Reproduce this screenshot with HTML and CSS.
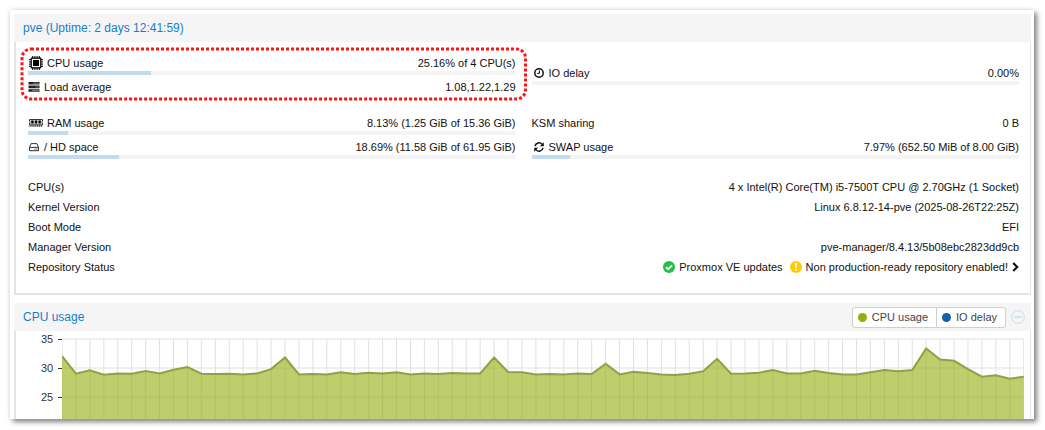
FILE: index.html
```html
<!DOCTYPE html>
<html lang="en">
<head>
  <meta charset="UTF-8" />
  <meta name="viewport" content="width=device-width, initial-scale=1" />
  <title>pve - Node Summary</title>
  <link rel="stylesheet" href="styles.css">
</head>
<body>

<main class="window">
  <section class="panel">
    <header class="panel-header">
      <h2>pve (Uptime: 2 days 12:41:59)</h2>
    </header>

    <div class="panel-body status">
      <div class="stats">
        <div class="stat-group highlighted">
          <svg class="highlight" aria-hidden="true"><rect x="1" y="1" rx="9" /></svg>
          <div class="stat">
            <div class="stat-line">
              <svg class="icon wide" viewBox="0 0 14 14" aria-hidden="true">
                <path d="M3.5 0v14M5.25 0v14M7 0v14M8.75 0v14M10.5 0v14M0 3.5h14M0 5.25h14M0 7h14M0 8.75h14M0 10.5h14" stroke="#111" stroke-width="0.9" />
                <rect x="1.6" y="1.6" width="10.8" height="10.8" rx="1" fill="#111" />
                <rect x="2.9" y="2.9" width="8.2" height="8.2" fill="#fff" />
                <rect x="4" y="4" width="6" height="6" fill="#000" />
              </svg>
              <span>CPU usage</span>
              <span class="value">25.16% of 4 CPU(s)</span>
            </div>
            <div class="bar"><div class="fill" style="width: 25.16%"></div></div>
          </div>
          <div class="stat">
            <div class="stat-line">
              <svg class="icon" viewBox="0 0 12 12" aria-hidden="true">
                <path d="M0.5 1h11v2.6h-11zM0.5 4.6h11v2.6h-11zM0.5 8.2h11v2.6h-11z" fill="#222" />
                <path d="M5 2.3h5.5M7.5 5.9h3M4 9.5h6.5" stroke="#777" stroke-width="1" />
              </svg>
              <span>Load average</span>
              <span class="value">1.08,1.22,1.29</span>
            </div>
          </div>
        </div>

        <div class="stat-group centered">
          <div class="stat">
            <div class="stat-line">
              <svg class="icon spaced" viewBox="0 0 12 12" aria-hidden="true">
                <circle cx="6" cy="6" r="4.2" fill="none" stroke="#111" stroke-width="1.5" />
                <path d="M6.4 3.4v3H4.1" fill="none" stroke="#111" stroke-width="1" />
              </svg>
              <span>IO delay</span>
              <span class="value">0.00%</span>
            </div>
            <div class="bar"><div class="fill" style="width: 0%"></div></div>
          </div>
        </div>

        <div class="stat-group">
          <div class="stat">
            <div class="stat-line">
              <svg class="icon wide" viewBox="0 0 14 14" aria-hidden="true">
                <path d="M0.5 3.5h13v1.7a1 1 0 0 0 0 1.8v1.8H0.5V7a1 1 0 0 0 0-1.8z" fill="#ddd" stroke="#222" stroke-width="0.9" />
                <path d="M2.2 4.6h2.4v3H2.2zM5.8 4.6h2.4v3H5.8zM9.4 4.6h2.4v3H9.4z" fill="#000" />
                <path d="M0.5 10h13" stroke="#222" stroke-width="1.6" stroke-dasharray="1.2 0.7" />
              </svg>
              <span>RAM usage</span>
              <span class="value">8.13% (1.25 GiB of 15.36 GiB)</span>
            </div>
            <div class="bar"><div class="fill" style="width: 8.13%"></div></div>
          </div>
          <div class="stat">
            <div class="stat-line">
              <svg class="icon" viewBox="0 0 12 12" aria-hidden="true">
                <path d="M1.5 6.3 3.2 2.6h5.6l1.7 3.7v3.4h-9zM1.5 6.4h9" fill="none" stroke="#333" stroke-width="1" stroke-linejoin="round" />
                <path d="M6.6 8.1h1M8.4 8.1h1" stroke="#333" stroke-width="1" />
              </svg>
              <span>/ HD space</span>
              <span class="value">18.69% (11.58 GiB of 61.95 GiB)</span>
            </div>
            <div class="bar"><div class="fill" style="width: 18.69%"></div></div>
          </div>
        </div>

        <div class="stat-group">
          <div class="stat">
            <div class="stat-line">
              <span>KSM sharing</span>
              <span class="value">0 B</span>
            </div>
          </div>
          <div class="stat">
            <div class="stat-line">
              <svg class="icon spaced" viewBox="0 0 12 12" aria-hidden="true">
                <path d="M2 5.2A4.1 4.1 0 0 1 9.2 3.4M10 6.8A4.1 4.1 0 0 1 2.8 8.6" fill="none" stroke="#111" stroke-width="1.5" />
                <path d="M10.8 1.2v4H6.8zM1.2 10.8v-4h4z" fill="#111" />
              </svg>
              <span>SWAP usage</span>
              <span class="value">7.97% (652.50 MiB of 8.00 GiB)</span>
            </div>
            <div class="bar"><div class="fill" style="width: 7.97%"></div></div>
          </div>
        </div>
      </div>

      <dl class="info">
        <div><dt>CPU(s)</dt><dd>4 x Intel(R) Core(TM) i5-7500T CPU @ 2.70GHz (1 Socket)</dd></div>
        <div><dt>Kernel Version</dt><dd>Linux 6.8.12-14-pve (2025-08-26T22:25Z)</dd></div>
        <div><dt>Boot Mode</dt><dd>EFI</dd></div>
        <div><dt>Manager Version</dt><dd>pve-manager/8.4.13/5b08ebc2823dd9cb</dd></div>
        <div>
          <dt>Repository Status</dt>
          <dd>
            <a href="#repositories" class="repo">
              <svg class="icon" viewBox="0 0 12 12" aria-hidden="true">
                <circle cx="6" cy="6" r="6" fill="#21bf4b" />
                <path d="M3 6.1 5.2 8.2 9.1 4.3" fill="none" stroke="#fff" stroke-width="1.8" />
              </svg>
              <span>Proxmox VE updates</span>
              <svg class="icon warn" viewBox="0 0 12 12" aria-hidden="true">
                <circle cx="6" cy="6" r="6" fill="#fc0" />
                <path d="M5 2.2h2L6.7 7H5.3zM5.1 8h1.8v1.7H5.1z" fill="#fff" />
              </svg>
              <span>Non production-ready repository enabled!</span>
              <svg class="chevron" viewBox="0 0 7 12" aria-hidden="true">
                <path d="M1.2 2 5.2 6 1.2 10" fill="none" stroke="#111" stroke-width="2.2" />
              </svg>
            </a>
          </dd>
        </div>
      </dl>
    </div>
  </section>

  <section class="panel">
    <header class="panel-header">
      <h2>CPU usage</h2>
      <div class="legend">
        <button type="button"><span class="dot cpu"></span>CPU usage</button>
        <button type="button"><span class="dot io"></span>IO delay</button>
      </div>
      <button type="button" class="collapse" aria-label="Collapse panel">
        <svg viewBox="0 0 14 14" aria-hidden="true">
          <circle cx="7" cy="7" r="6.3" fill="none" stroke="#c5dff0" stroke-width="1" />
          <path d="M3.5 7h7" stroke="#c5dff0" stroke-width="1.4" />
        </svg>
      </button>
    </header>

    <div class="panel-body chart">
      <div class="axis">
        <span>35</span>
        <span>30</span>
        <span>25</span>
      </div>
      <svg id="plot" class="plot" viewBox="0 0 69 81" preserveAspectRatio="none" role="img" aria-label="CPU usage over time"></svg>
    </div>
  </section>
</main>

<script>
  const cpu = [
    32.04, 29.02, 29.59, 28.85, 29.07, 29.02, 29.47, 29.07, 29.70, 30.16,
    29.02, 28.96, 29.02, 28.90, 29.07, 29.81, 31.81, 28.90, 28.96, 28.90,
    29.25, 28.96, 29.19, 29.07, 29.25, 28.90, 29.07, 28.96, 29.13, 29.07,
    29.07, 31.81, 29.30, 29.25, 28.90, 28.96, 28.90, 29.07, 28.96, 30.73,
    28.90, 29.36, 29.13, 28.90, 28.79, 29.02, 29.42, 31.58, 29.02, 29.07,
    29.19, 29.64, 29.07, 29.07, 29.53, 29.13, 28.90, 28.90, 29.25, 29.64,
    29.42, 29.64, 33.35, 31.47, 31.24, 29.81, 28.50, 28.73, 28.16, 28.50
  ];

  const max = 35;
  const step = 29; // pixels between two axis labels
  const toY = value => 1 + (max - value) * step / 5;

  // Grid
  let grid = "";
  for (let x = 0; x < cpu.length; x++) grid += `M${x} 1V81`;
  for (let v = max; v >= 25; v -= 5) grid += `M0 ${toY(v)}H69`;

  // Area and its top line
  const line = cpu.map((v, i) => `${i} ${toY(v).toFixed(2)}`).join("L");

  document.getElementById("plot").innerHTML = `
    <path class="grid" d="${grid}" />
    <path class="area" d="M${line}V81H0Z" />
    <path class="line" d="M${line}" />
  `;
</script>

</body>
</html>
```
FILE: styles.css
```css
/* Reset */
* {
  box-sizing: border-box;
  margin: 0;
  padding: 0;
}

body {
  font-family: "Liberation Sans", Arial, sans-serif;
  font-size: 11px;
  line-height: 16px;
  color: #111;
  background: #fff;
  padding: 10px 11px 10px 10px;
}

button {
  font: inherit;
  color: inherit;
  background: none;
  border: none;
  cursor: pointer;
}

.window {
  display: flex;
  flex-direction: column;
  gap: 8px;
  padding: 4px 3px 0 4px;
  background: #fff;
  box-shadow: 3px 3px 5px #888, 0 0 5px #ddd;
}

/* Panels */
.panel-header {
  display: flex;
  align-items: center;
  height: 28px;
  padding: 0 6px 0 9px;
  background: #f5f5f5;
}

.panel-header h2 {
  margin-right: auto;
  font-size: 12px;
  font-weight: normal;
  color: #157fcc;
}

.panel-body {
  border: solid #e4e4e4;
  border-width: 0 1px 2px 2px;
}

.status {
  padding: 13px 11px 18px 12px;
}

/* Usage statistics */
.stats {
  display: grid;
  grid-template-columns: 1fr 1fr;
  gap: 20px 16px;
}

.stat-group {
  display: flex;
  flex-direction: column;
  gap: 4px;
}

.stat-group:nth-child(n + 3) .stat {
  min-height: 20px;
}

.centered {
  justify-content: center;
}

.stat-line {
  display: flex;
  align-items: center;
  gap: 4px;
}

.value {
  margin-left: auto;
}

.bar {
  height: 4px;
  background: #f4f4f4;
}

.fill {
  height: 100%;
  background: #c1dcf0;
}

.icon {
  flex: none;
  width: 12px;
  height: 12px;
}

.icon.wide {
  width: 14px;
  height: 14px;
  margin-left: 1px;
}

.icon.spaced {
  margin-left: 1px;
}

.highlighted {
  position: relative;
}

.highlight {
  position: absolute;
  top: -7px;
  left: -7px;
  width: calc(100% + 18px);
  height: calc(100% + 12px);
  overflow: visible;
  pointer-events: none;
}

.highlight rect {
  width: calc(100% - 2px);
  height: calc(100% - 2px);
  fill: none;
  stroke: #ff1414;
  stroke-width: 3;
  stroke-dasharray: 3 2;
}

/* Node information */
.info {
  display: flex;
  flex-direction: column;
  gap: 4px;
  margin-top: 20px;
}

.info div {
  display: flex;
  justify-content: space-between;
}

.repo {
  display: flex;
  align-items: center;
  gap: 4px;
  color: inherit;
  text-decoration: none;
}

.warn {
  margin-left: 3px;
}

.chevron {
  width: 7px;
  height: 12px;
}

/* Chart */
.legend {
  display: flex;
  border: 1px solid #d0d0d0;
  border-radius: 3px;
  background: #fff;
  color: #444;
}

.legend button {
  display: flex;
  align-items: center;
  gap: 5px;
  height: 19px;
  padding: 0 8px 0 5px;
}

.legend button + button {
  border-left: 1px solid #d0d0d0;
}

.dot {
  width: 9px;
  height: 9px;
  border-radius: 50%;
}

.dot.cpu {
  background: #94ae0a;
}

.dot.io {
  background: #115fa6;
}

.collapse {
  width: 14px;
  height: 14px;
  margin-left: 5px;
}

.collapse svg {
  display: block;
}

.chart {
  display: flex;
  padding: 7px 6px 0 25px;
  border-bottom: none;
}

.axis {
  display: flex;
  flex-direction: column;
  gap: 13px;
  margin-top: -7px;
  color: #333;
}

.axis span {
  display: flex;
  align-items: center;
  gap: 5px;
}

.axis span::after {
  content: "";
  width: 4px;
  height: 1px;
  background: #333;
}

.plot {
  flex: 1;
  min-width: 0;
  height: 81px;
}

.plot path {
  vector-effect: non-scaling-stroke;
}

.grid {
  fill: none;
  stroke: #e0e0e0;
  stroke-width: 1;
}

.area {
  fill: #94ae0a;
  fill-opacity: 0.6;
}

.line {
  fill: none;
  stroke: #8fa145;
  stroke-width: 2;
}
```
